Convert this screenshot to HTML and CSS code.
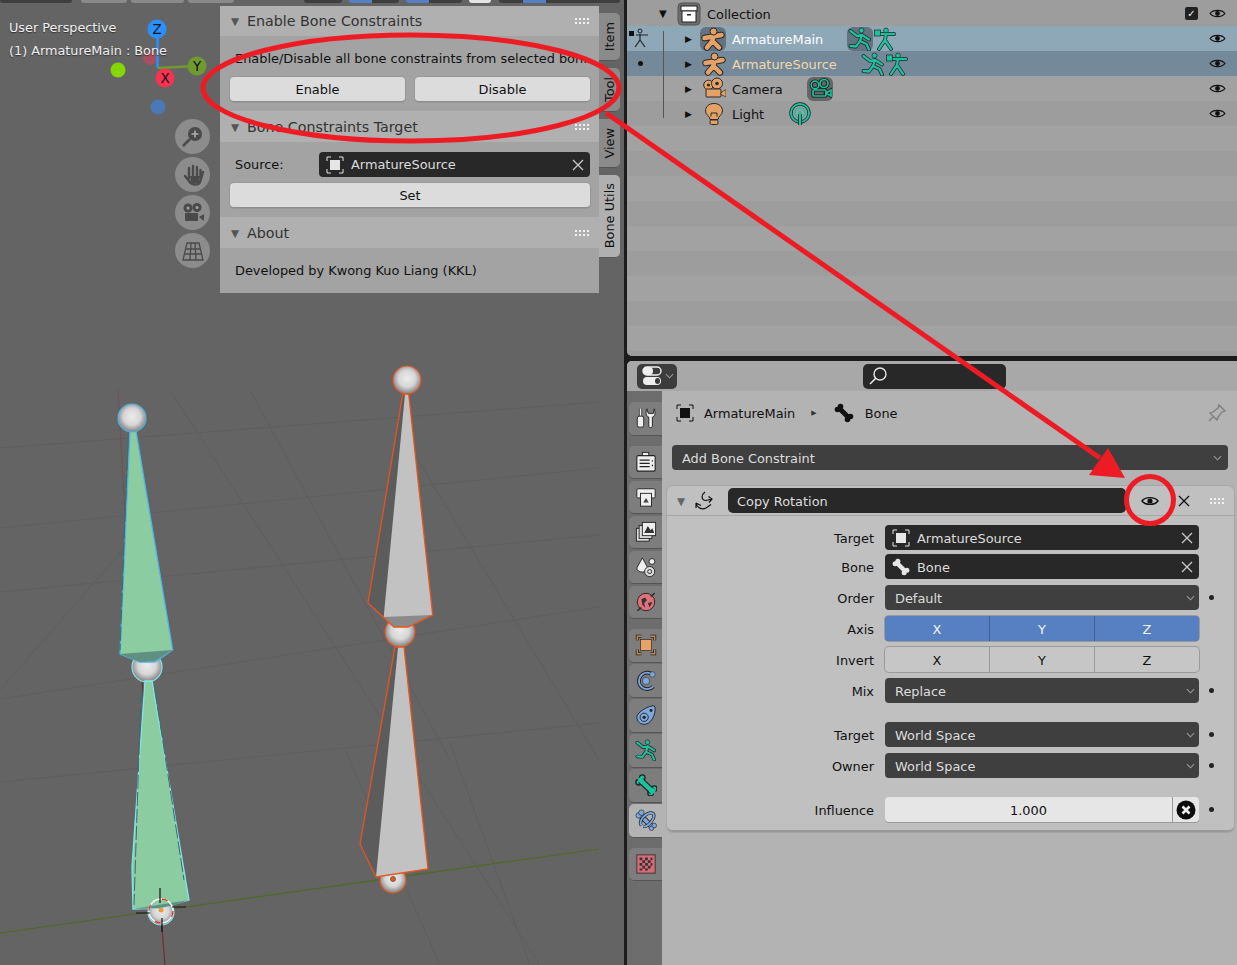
FILE: index.html
```html
<!DOCTYPE html>
<html lang="en">
<head>
<meta charset="utf-8">
<title>Bone Utils</title>
<link rel="stylesheet" href="styles.css">
</head>
<body>
<svg class="defs" width="0" height="0">
  <defs>
    <radialGradient id="ball" cx="50%" cy="45%" r="55%"><stop offset="0" stop-color="#ececec"/><stop offset=".55" stop-color="#d6d6d6"/><stop offset="1" stop-color="#7f7f7f"/></radialGradient>
    <symbol id="grip" viewBox="0 0 16 8"><path d="M1 1h2v2H1zM5 1h2v2H5zM9 1h2v2H9zM13 1h2v2h-2zM1 5h2v2H1zM5 5h2v2H5zM9 5h2v2H9zM13 5h2v2h-2z" fill="#f2f2f2"/></symbol>
    <symbol id="eye" viewBox="0 0 18 12"><path d="M1 6C4 1.500 14 1.500 17 6C14 10.500 4 10.500 1 6Z" fill="none" stroke="#111" stroke-width="1.400"/><circle cx="9" cy="6" r="2.600" fill="#111"/></symbol>
    <symbol id="x" viewBox="0 0 12 12"><path d="M1 1L11 11M11 1L1 11" fill="none" stroke="currentColor" stroke-width="1.300"/></symbol>
    <symbol id="chev" viewBox="0 0 10 6"><path d="M1 1L5 5L9 1" fill="none" stroke="#9a9a9a" stroke-width="1.200"/></symbol>
    <symbol id="objsel" viewBox="0 0 18 18"><path d="M1 5V1H5M13 1H17V5M17 13V17H13M5 17H1V13" fill="none" stroke="currentColor" stroke-width="1"/><rect x="4" y="4" width="10" height="10" fill="currentColor"/></symbol>
    <symbol id="armature" viewBox="0 0 24 24"><g fill="none" stroke-linecap="round" stroke-linejoin="round"><path d="M3.500 11L20.500 8M12 10L11.500 14L6 20.500M11.500 14L18 20.500" stroke="#2a2a2a" stroke-width="6.500"/><path d="M3.500 11L20.500 8M12 10L11.500 14L6 20.500M11.500 14L18 20.500" stroke="#e4a267" stroke-width="4.500"/></g><circle cx="12.500" cy="4.500" r="3.500" fill="#e4a267" stroke="#2a2a2a"/></symbol>
    <symbol id="pose" viewBox="0 0 24 24"><g fill="none" stroke-linecap="round" stroke-linejoin="round"><path d="M2.500 4L9 9L14 8L21 12.500M14 8L12 14L18.500 17L21 22.500M12 14L8 19.500L2.500 19" stroke="#222" stroke-width="3.800"/><path d="M2.500 4L9 9L14 8L21 12.500M14 8L12 14L18.500 17L21 22.500M12 14L8 19.500L2.500 19" stroke="#1cc29f" stroke-width="2.300"/></g><circle cx="13.500" cy="3.500" r="2.500" fill="#1cc29f" stroke="#222" stroke-width=".7"/></symbol>
    <symbol id="armdata" viewBox="0 0 24 24"><g fill="none" stroke-linecap="round" stroke-linejoin="round"><path d="M7 7L21 7M13 7L12 13L6 22M12 13L18 22" stroke="#222" stroke-width="3.800"/><path d="M7 7L21 7M13 7L12 13L6 22M12 13L18 22" stroke="#1cc29f" stroke-width="2.300"/></g><rect x="1.500" y="3" width="6" height="6" fill="#1cc29f" stroke="#222" stroke-width=".7"/><circle cx="13" cy="3.500" r="2.400" fill="#1cc29f" stroke="#222" stroke-width=".7"/></symbol>
    <symbol id="camera" viewBox="0 0 24 24"><circle cx="6.500" cy="8" r="4.800" fill="#e4a267" stroke="#2a2a2a"/><circle cx="15" cy="6.500" r="5.500" fill="#e4a267" stroke="#2a2a2a"/><circle cx="6.500" cy="8" r="1.600" fill="#2a2a2a"/><circle cx="15" cy="6.500" r="1.800" fill="#2a2a2a"/><rect x="4" y="12" width="15" height="8" rx="1" fill="#e4a267" stroke="#2a2a2a"/><path d="M19 15.500L24 12.500V20L19 17.500Z" fill="#e4a267" stroke="#2a2a2a" stroke-width=".7"/></symbol>
    <symbol id="camdata" viewBox="0 0 24 24"><g fill="none" stroke="#111" stroke-width="3.200"><circle cx="7" cy="8" r="3.800"/><circle cx="16" cy="6.500" r="4"/><rect x="5" y="13" width="13" height="6" rx="1"/><path d="M18 16L23 13V19Z"/></g><g fill="none" stroke="#1cc29f" stroke-width="1.700"><circle cx="7" cy="8" r="3.800"/><circle cx="16" cy="6.500" r="4"/><rect x="5" y="13" width="13" height="6" rx="1"/><path d="M18 16L23 13V19Z"/></g></symbol>
    <symbol id="light" viewBox="0 0 24 24"><path d="M12 1.500C6.500 1.500 3.500 5 3.500 9C3.500 13 8 14 8 17.500H16C16 14 20.500 13 20.500 9C20.500 5 17.500 1.500 12 1.500Z" fill="#e4a267" stroke="#2a2a2a"/><path d="M9 11V14.500M15 11V14.500M9 11H15" stroke="#2a2a2a" fill="none"/><rect x="8" y="18" width="8" height="4.500" rx="1.500" fill="#e4a267" stroke="#2a2a2a"/></symbol>
    <symbol id="lightdata" viewBox="0 0 24 24"><circle cx="12" cy="11" r="9" fill="none" stroke="#222" stroke-width="3.400"/><circle cx="12" cy="11" r="9" fill="none" stroke="#1cc29f" stroke-width="2"/><circle cx="12" cy="11" r="5" fill="none" stroke="#1cc29f" stroke-width="1.500"/><circle cx="12" cy="11" r="2" fill="#1cc29f"/><path d="M12 12V23" stroke="#222" stroke-width="3.500"/><path d="M12 12V23" stroke="#1cc29f" stroke-width="2"/></symbol>
    <symbol id="collection" viewBox="0 0 24 24"><rect x="1" y="1" width="22" height="22" rx="4" fill="#6e6e6e" stroke="#555"/><rect x="4" y="4" width="16" height="5" fill="#fff" stroke="#222"/><rect x="5" y="9" width="14" height="11" fill="#fff" stroke="#222"/><rect x="10" y="12" width="4" height="1.500" fill="#222"/></symbol>
    <symbol id="bone" viewBox="0 0 20 20"><path d="M5 5L15 15" stroke="currentColor" stroke-width="5"/><circle cx="3.500" cy="6.500" r="2.800" fill="currentColor"/><circle cx="6.500" cy="3.500" r="2.800" fill="currentColor"/><circle cx="13.500" cy="16.500" r="2.800" fill="currentColor"/><circle cx="16.500" cy="13.500" r="2.800" fill="currentColor"/></symbol>
    <symbol id="bonefat" viewBox="0 0 24 24"><g stroke="#222" stroke-width="1.400" fill="#1cc29f"><circle cx="4" cy="9" r="3"/><circle cx="8" cy="4" r="3"/><circle cx="17" cy="21" r="3"/><circle cx="21" cy="16" r="3"/></g><path d="M6 7L19 19" stroke="#222" stroke-width="7.500"/><path d="M4.500 8L8 4.500M17 21L21 16.500M6 7L19 19" stroke="#1cc29f" stroke-width="5"/></symbol>
  </defs>
</svg>

<div class="app">
  <section class="viewport">
    <svg class="scene" viewBox="0 0 624 965" width="624" height="965">
      <g class="grid">
        <path d="M0 448L599 402M0 528L599 468M0 592L599 535M0 699L599 607M0 782L599 723"/>
        <path d="M170 390L540 965M250 390L450 760M400 430L599 760M450 743L530 965M140 530L0 690M345 750L440 965"/>
      </g>
      <path d="M118 390L133 660" class="redaxis"/>
      <path d="M142 680L165 965" class="redaxis2"/>
      <path d="M0 933L599 849" class="greenaxis"/>

      <circle cx="147" cy="667" r="15" class="sphere s-blue"/>
      <polygon points="130,431 136,431 172.700,650 155,662 140,662 120,654" class="bone-blue"/>
      <polygon points="120,654 172.700,650 155,661 140,662" class="bone-green-dark"/>
      <circle cx="132" cy="418" r="14" class="sphere s-blue2"/>
      <path d="M128 440L120 650" class="bone-dash"/>

      <circle cx="161" cy="912" r="13" class="sphere s-cyan"/>
      <polygon points="145,681 152,681 189,900 160,908 133,909 132,867" class="bone-cyan"/>
      <polygon points="133,909 189,900 175,905 160,908" class="bone-green-dark"/>
      <path d="M141 690L134 905M155 690L184 880" class="bone-dash"/>
      <g class="cursor">
        <circle cx="161" cy="911" r="12" class="cur-w"/>
        <circle cx="161" cy="911" r="12" class="cur-r"/>
        <path d="M160 888V903M162 918V932M136 913H150M172 907H186"/>
      </g>
      <circle cx="161" cy="910" r="2.500" fill="#f29a2e"/>

      <circle cx="393" cy="880" r="13" class="sphere s-orange"/>
      <circle cx="400" cy="632" r="15" class="sphere s-orange"/>
      <polygon points="402.700,394 408.700,394 432.700,615 408,627 394,627 368,603" class="bone-dark"/>
      <polygon points="405,394 408.700,394 432.700,615 408,627 394,627 383.700,617" class="bone-grey"/>
      <polygon points="383.700,617 432.700,615 408,627 394,627" class="bone-mid"/>
      <polygon points="402.700,394 408.700,394 432.700,615 408,627 394,627 368,603" class="bone-line"/>
      <circle cx="407" cy="380" r="14" class="sphere s-orange"/>

      <polygon points="395,647 404,647 428,869 376,877 360,844" class="bone-dark"/>
      <polygon points="398,647 404,647 428,869 376,877" class="bone-grey"/>
      <polygon points="395,647 404,647 428,869 376,877 360,844" class="bone-line"/>
      <circle cx="393" cy="879" r="2.500" fill="#e85a20" stroke="#333" stroke-width=".6"/>
    </svg>

    <div class="topstrip">
      <span class="strip s1"></span><span class="strip s2"></span><span class="strip s3"></span><span class="strip s4"></span>
      <span class="strip s5"></span><span class="strip s6"></span><span class="strip s7"></span><span class="strip s8"></span><span class="strip s9"></span>
    </div>

    <svg class="gizmo" viewBox="0 0 220 120" width="220" height="120">
      <circle cx="150" cy="58" r="7" fill="#a8505f"/>
      <circle cx="118" cy="70" r="7.500" fill="#84d800"/>
      <circle cx="158" cy="107" r="7.500" fill="#4a79b5"/>
      <path d="M157.500 68V30" stroke="#2a8fff" stroke-width="2.500"/>
      <path d="M157.500 68L197 66" stroke="#6f9a2e" stroke-width="2.500"/>
      <circle cx="157" cy="29" r="9.500" fill="#2a8fff"/>
      <circle cx="197" cy="66" r="9.500" fill="#6f9a2e"/>
      <circle cx="165" cy="78" r="9.500" fill="#f53352"/>
      <text x="157" y="34" class="gz">Z</text>
      <text x="197" y="71" class="gz">Y</text>
      <text x="165" y="83" class="gz">X</text>
    </svg>

    <div class="viewinfo">
      <div>User Perspective</div>
      <div>(1) ArmatureMain : Bone</div>
    </div>

    <div class="navgizmo">
      <div class="navbtn"><svg viewBox="0 0 24 24" width="24" height="24"><circle cx="14" cy="9" r="7" fill="#4a4a4a"/><path d="M14 5.500V12.500M10.500 9H17.500" stroke="#b0b0b0" stroke-width="1.600"/><path d="M9 14L2 21" stroke="#4a4a4a" stroke-width="2.500"/></svg></div>
      <div class="navbtn"><svg viewBox="0 0 24 24" width="24" height="24"><path d="M4 13L8 18C10 22 17 23 19 19L22 9M8 15V5M12 14V3M16 14V4M19.500 14V7" fill="none" stroke="#4a4a4a" stroke-width="2.400" stroke-linecap="round"/><path d="M9 13H19L18 20H10Z" fill="#4a4a4a"/></svg></div>
      <div class="navbtn"><svg viewBox="0 0 24 24" width="24" height="24"><circle cx="7" cy="7" r="4.500" fill="#4a4a4a"/><circle cx="16" cy="6.500" r="4.500" fill="#4a4a4a"/><circle cx="7" cy="7" r="1.500" fill="#a0a0a0"/><circle cx="16" cy="6.500" r="1.500" fill="#a0a0a0"/><rect x="4" y="12" width="13" height="8" rx="1" fill="#4a4a4a"/><path d="M18 16L23 13V20Z" fill="#4a4a4a"/></svg></div>
      <div class="navbtn"><svg viewBox="0 0 24 24" width="24" height="24"><path d="M6 4H18L22 21H2ZM4.500 10H19.500M3.500 15H20.500M10 4L9 21M14 4L15 21" fill="none" stroke="#4a4a4a" stroke-width="1.300"/></svg></div>
    </div>

    <div class="sidebar">
      <div class="npanel">
        <div class="phead first"><span class="tri">▼</span><span class="ptitle">Enable Bone Constraints</span><svg class="grip"><use href="#grip"/></svg></div>
        <div class="pbody">
          <div class="ptext">Enable/Disable all bone constraints from selected bon...</div>
          <div class="btnrow"><button class="btn">Enable</button><button class="btn">Disable</button></div>
        </div>
        <div class="phead"><span class="tri">▼</span><span class="ptitle">Bone Constraints Target</span><svg class="grip"><use href="#grip"/></svg></div>
        <div class="pbody">
          <div class="srcrow"><span class="ptext srclabel">Source:</span>
            <div class="darkfield"><svg class="ficon"><use href="#objsel"/></svg><span>ArmatureSource</span><svg class="fx"><use href="#x"/></svg></div>
          </div>
          <button class="btn btnwide">Set</button>
        </div>
        <div class="phead"><span class="tri">▼</span><span class="ptitle">About</span><svg class="grip"><use href="#grip"/></svg></div>
        <div class="pbody pabout"><div class="ptext">Developed by Kwong Kuo Liang (KKL)</div></div>
      </div>
      <div class="vtabs">
        <div class="vtab t-item"><span>Item</span></div>
        <div class="vtab t-tool"><span>Tool</span></div>
        <div class="vtab t-view"><span>View</span></div>
        <div class="vtab t-utils"><span>Bone Utils</span></div>
      </div>
    </div>
  </section>

  <div class="right">
    <section class="outliner">
      <div class="treeline"></div>
      <div class="row r0">
        <span class="otri ind0">▼</span><svg class="oicon"><use href="#collection"/></svg><span class="oname">Collection</span>
        <span class="check">✓</span><svg class="oeye"><use href="#eye"/></svg>
      </div>
      <div class="row r-sel">
        <svg class="mode" viewBox="0 0 24 24"><rect x="1" y="5" width="5" height="5" fill="#111"/><circle cx="12" cy="5" r="2" fill="none" stroke="#222"/><path d="M8 9H20M12 8V14L7 21M12 14L17 21" fill="none" stroke="#222" stroke-width="1.200"/></svg>
        <span class="otri ind1">▶</span><span class="hl"><svg class="oicon"><use href="#armature"/></svg></span><span class="oname white">ArmatureMain</span>
        <span class="hl sub"><svg class="oicon"><use href="#pose"/></svg></span><svg class="oicon"><use href="#armdata"/></svg>
        <svg class="oeye"><use href="#eye"/></svg>
      </div>
      <div class="row r-act">
        <span class="mdot"></span>
        <span class="otri ind2">▶</span><svg class="oicon"><use href="#armature"/></svg><span class="oname peach">ArmatureSource</span>
        <svg class="oicon sub"><use href="#pose"/></svg><svg class="oicon"><use href="#armdata"/></svg>
        <svg class="oeye"><use href="#eye"/></svg>
      </div>
      <div class="row r1">
        <span class="otri ind2">▶</span><svg class="oicon"><use href="#camera"/></svg><span class="oname">Camera</span>
        <span class="hl sub"><svg class="oicon"><use href="#camdata"/></svg></span>
        <svg class="oeye"><use href="#eye"/></svg>
      </div>
      <div class="row r0">
        <span class="otri ind2">▶</span><svg class="oicon"><use href="#light"/></svg><span class="oname">Light</span>
        <svg class="oicon sub"><use href="#lightdata"/></svg>
        <svg class="oeye"><use href="#eye"/></svg>
      </div>
      <div class="row r1"></div><div class="row r0"></div><div class="row r1"></div><div class="row r0"></div><div class="row r1"></div><div class="row r0"></div><div class="row r1"></div><div class="row r0"></div><div class="row r1"></div><div class="row r0"></div>
    </section>

    <section class="props">
      <header class="prophead">
        <div class="editor"><svg viewBox="0 0 22 20" width="22" height="20"><rect x="1" y="1" width="18" height="8" rx="4" fill="none" stroke="#eee" stroke-width="1.500"/><rect x="1" y="1" width="10" height="8" rx="4" fill="#eee"/><rect x="1" y="11" width="18" height="8" rx="4" fill="#eee"/><rect x="13" y="12" width="5" height="6" rx="3" fill="#3c3c3c"/></svg><svg class="echev"><use href="#chev"/></svg></div>
        <div class="search"><svg viewBox="0 0 20 20" width="20" height="20"><circle cx="12" cy="8" r="6" fill="none" stroke="#e6e6e6" stroke-width="1.400"/><path d="M8 12L2 18" stroke="#e6e6e6" stroke-width="1.600"/></svg></div>
      </header>
      <div class="propmain">
        <nav class="tabs">
          <div class="tab"><svg viewBox="0 0 24 24"><path d="M6 1.500V10" stroke="#222" stroke-width="3.400"/><path d="M6 1.500V10" stroke="#eee" stroke-width="1.800"/><rect x="2.500" y="10" width="7" height="12" rx="2" fill="#eee" stroke="#222"/><path d="M13 2C11 8 13 10.500 15 11V21C15 23 19 23 19 21V11C21 10.500 23 8 21 2L20 7H14.500Z" fill="#eee" stroke="#222"/></svg></div>
          <div class="tab gap"><svg viewBox="0 0 24 24"><rect x="2" y="5" width="20" height="17" rx="1.500" fill="#eee" stroke="#222" stroke-width="1.200"/><rect x="8" y="1.500" width="7" height="3.500" fill="#eee" stroke="#222"/><path d="M5 10H16M5 13.500H16M5 17H16M19 10V11.500M19 15V16.500" stroke="#222" stroke-width="1.400"/></svg></div>
          <div class="tab"><svg viewBox="0 0 24 24"><rect x="2" y="3" width="20" height="10" rx="1.500" fill="#eee" stroke="#222"/><rect x="6" y="8" width="12" height="14" fill="#eee" stroke="#222"/><path d="M9 18L12 13L15 18Z" fill="#444"/></svg></div>
          <div class="tab"><svg viewBox="0 0 24 24"><rect x="1.500" y="8" width="14" height="14" fill="#ddd" stroke="#222"/><rect x="4.500" y="5" width="14" height="14" fill="#ddd" stroke="#222"/><rect x="8" y="1.500" width="14.500" height="14.500" fill="#eee" stroke="#222"/><path d="M10 13L14 5.500L17 10L19 8L21 13Z" fill="#333"/></svg></div>
          <div class="tab"><svg viewBox="0 0 24 24"><path d="M8 2L14 13C14 19 2 19 2 13Z" fill="#eee" stroke="#222"/><circle cx="18.500" cy="6" r="3.200" fill="#eee" stroke="#222"/><circle cx="16" cy="17" r="5.500" fill="#ddd" stroke="#222"/><circle cx="16" cy="17" r="2.200" fill="none" stroke="#222"/></svg></div>
          <div class="tab"><svg viewBox="0 0 24 24"><circle cx="12" cy="12" r="9.500" fill="#e0707a" stroke="#222"/><path d="M7 9L11 7L13 10L10 13L11 18L8 15ZM14 13L19 12L16 18Z" fill="#333"/><path d="M2.500 21.500L7 18M21.500 2.500L17 6" stroke="#222" stroke-width="1.500"/></svg></div>
          <div class="tab gap"><svg viewBox="0 0 24 24"><path d="M2.500 7V2.500H7M17 2.500H21.500V7M21.500 17V21.500H17M7 21.500H2.500V17" fill="none" stroke="#222" stroke-width="3.200"/><path d="M2.500 7V2.500H7M17 2.500H21.500V7M21.500 17V21.500H17M7 21.500H2.500V17" fill="none" stroke="#c98a52" stroke-width="1.500"/><rect x="6" y="6" width="12" height="12" fill="#e8a468" stroke="#222" stroke-width=".7"/></svg></div>
          <div class="tab"><svg viewBox="0 0 24 24"><path d="M20 7A9 9 0 1 0 20 19" fill="none" stroke="#222" stroke-width="4"/><path d="M20 7A9 9 0 1 0 20 19" fill="none" stroke="#7ea7de" stroke-width="2"/><circle cx="12" cy="13" r="4" fill="#7ea7de" stroke="#222" stroke-width=".6"/><circle cx="19" cy="6" r="3" fill="#7ea7de" stroke="#222" stroke-width=".6"/></svg></div>
          <div class="tab"><svg viewBox="0 0 24 24"><path d="M2 14C2 9 16 1 21 2C24 6 20 20 12 22C6 23 2 19 2 14Z" fill="#7ea7de" stroke="#222"/><circle cx="10" cy="14.500" r="4.500" fill="none" stroke="#222"/><circle cx="10" cy="14.500" r="1.800" fill="#222"/><circle cx="17.500" cy="7" r="1.600" fill="#222"/></svg></div>
          <div class="tab"><svg><use href="#pose"/></svg></div>
          <div class="tab"><svg><use href="#bonefat"/></svg></div>
          <div class="tab active"><svg viewBox="0 0 24 24"><path d="M5 6L18 19" stroke="#222" stroke-width="6"/><path d="M5 6L18 19" stroke="#7ea7de" stroke-width="4"/><circle cx="4" cy="7" r="3" fill="#7ea7de" stroke="#222" stroke-width=".7"/><circle cx="7" cy="4" r="3" fill="#7ea7de" stroke="#222" stroke-width=".7"/><circle cx="18" cy="21" r="2.500" fill="#7ea7de" stroke="#222" stroke-width=".7"/><circle cx="21" cy="18" r="2.500" fill="#7ea7de" stroke="#222" stroke-width=".7"/><path d="M7 18C3 12 14 2 20 5C23 10 14 20 9 19" fill="none" stroke="#222" stroke-width="3.500"/><path d="M7 18C3 12 14 2 20 5C23 10 14 20 9 19" fill="none" stroke="#7ea7de" stroke-width="2"/></svg></div>
          <div class="tab gap"><svg viewBox="0 0 24 24"><rect x="2" y="2" width="20" height="20" fill="#d96b78" stroke="#333"/><path d="M5 5h3v3H5zM11 5h3v3h-3zM17 5h2v3h-2zM8 8h3v3H8zM14 8h3v3h-3zM5 11h3v3H5zM11 11h3v3h-3zM17 11h2v3h-2zM8 14h3v3H8zM14 14h3v3h-3zM5 17h3v2H5zM11 17h3v2h-3z" fill="#333"/></svg></div>
        </nav>
        <main class="context">
          <div class="crumbs">
            <svg class="crumbicon"><use href="#objsel"/></svg><span class="cname">ArmatureMain</span><span class="csep">▶</span>
            <svg class="cbone"><use href="#bone"/></svg><span class="cleaf">Bone</span>
            <svg class="pin" viewBox="0 0 20 20"><path d="M12 2L18 8L15 9L11 14L10 17L3 10L6 9L11 5ZM6 14L2 18" fill="none" stroke="#7d7d7d" stroke-width="1.300"/></svg>
          </div>
          <div class="addbtn"><span>Add Bone Constraint</span><svg class="chev"><use href="#chev"/></svg></div>
          <div class="cpanel">
            <div class="chead">
              <span class="ctri">▼</span>
              <svg class="crot" viewBox="0 0 20 20"><path d="M11 1C7 4 7 9 12 9.500L18 8M14.500 5.500L18 8L15 11.500M2 12C3 17 8 19 12 17L17 13.500M7 14.500L2 12M2 12L2 17" fill="none" stroke="#111" stroke-width="1.200"/></svg>
              <div class="cname-field">Copy Rotation</div>
              <svg class="ceye"><use href="#eye"/></svg>
              <svg class="cx"><use href="#x"/></svg>
              <svg class="grip"><use href="#grip"/></svg>
            </div>
            <div class="cbody">
              <div class="frow tight"><label>Target</label><div class="darkfield wide"><svg class="ficon"><use href="#objsel"/></svg><span>ArmatureSource</span><svg class="fx"><use href="#x"/></svg></div><i class="nodot"></i></div>
              <div class="frow"><label>Bone</label><div class="darkfield wide"><svg class="ficon whitebone"><use href="#bone"/></svg><span>Bone</span><svg class="fx"><use href="#x"/></svg></div><i class="nodot"></i></div>
              <div class="frow"><label>Order</label><div class="select"><span>Default</span><svg class="chev"><use href="#chev"/></svg></div><i class="dot"></i></div>
              <div class="frow"><label>Axis</label><div class="tri-btn blue"><b>X</b><b>Y</b><b>Z</b></div><i class="nodot"></i></div>
              <div class="frow"><label>Invert</label><div class="tri-btn"><b>X</b><b>Y</b><b>Z</b></div><i class="nodot"></i></div>
              <div class="frow spaced"><label>Mix</label><div class="select"><span>Replace</span><svg class="chev"><use href="#chev"/></svg></div><i class="dot"></i></div>
              <div class="frow"><label>Target</label><div class="select"><span>World Space</span><svg class="chev"><use href="#chev"/></svg></div><i class="dot"></i></div>
              <div class="frow spaced"><label>Owner</label><div class="select"><span>World Space</span><svg class="chev"><use href="#chev"/></svg></div><i class="dot"></i></div>
              <div class="frow"><label>Influence</label><div class="slider"><span>1.000</span><div class="slidex"><svg viewBox="0 0 20 20"><circle cx="10" cy="10" r="9.500" fill="#0c0c0c"/><path d="M6.500 6.500L13.500 13.500M13.500 6.500L6.500 13.500" stroke="#eee" stroke-width="2.600"/></svg></div></div><i class="dot"></i></div>
            </div>
          </div>
        </main>
      </div>
    </section>
  </div>
</div>

<svg class="annot" viewBox="0 0 1237 965" width="1237" height="965">
  <ellipse cx="411" cy="88" rx="208" ry="53" class="red"/>
  <path d="M606 113L1100 458" class="red"/>
  <polygon points="1108,448 1089,475 1125,478" fill="#ed1c24"/>
  <circle cx="1150" cy="500" r="23.500" class="red"/>
</svg>
</body>
</html>
```

FILE: styles.css
```css
* { box-sizing: border-box; }
html, body { margin: 0; padding: 0; }
body { width: 1237px; height: 965px; overflow: hidden; position: relative; font-family: "DejaVu Sans", sans-serif; font-size: 12.9px; color: #111; background: #1c1c1c; }
.defs { position: absolute; }
.app { display: flex; width: 1237px; height: 965px; }

.viewport { position: relative; width: 624px; height: 965px; background: #646464; overflow: hidden; flex: none; }
.scene { position: absolute; left: 0; top: 0; }
.grid path { fill: none; stroke: #5e5e5e; stroke-width: 1; }
.redaxis { fill: none; stroke: #6e5252; stroke-width: 1; }
.redaxis2 { fill: none; stroke: #6b2f35; stroke-width: 1.200; }
.greenaxis { fill: none; stroke: #4f6b22; stroke-width: 1.200; }
.sphere { fill: url(#ball); }
.s-blue { stroke: #8be4ea; stroke-width: 1.200; }
.s-blue2 { stroke: #4ab5ea; stroke-width: 1.200; }
.s-cyan { stroke: #8be4ea; stroke-width: 1.200; }
.s-orange { stroke: #e8531f; stroke-width: 1.200; }
.bone-blue { fill: #8bcca0; stroke: #4ab5ea; stroke-width: 1.300; }
.bone-cyan { fill: #8bcca0; stroke: #7fe6ef; stroke-width: 1.300; }
.bone-green-dark { fill: #5f9082; }
.bone-dash { fill: none; stroke: #3d6a70; stroke-width: 1; stroke-dasharray: 14 3; }
.bone-dark { fill: #5c5c5c; }
.bone-grey { fill: #c2c2c2; }
.bone-mid { fill: #8a8a8a; }
.bone-line { fill: none; stroke: #e8531f; stroke-width: 1.300; }
.cursor path { stroke: #111; stroke-width: 1.200; fill: none; }
.cur-w { fill: none; stroke: #fff; stroke-width: 1.300; }
.cur-r { fill: none; stroke: #e8282c; stroke-width: 1.300; stroke-dasharray: 6 13; }

.topstrip { position: absolute; inset: 0 0 auto 0; height: 3px; display: flex; }
.strip { display: block; height: 3px; border-radius: 0 0 4px 4px; background: #8a8a8a; margin-right: 4px; }
.s1 { width: 72px; background: #3e3e3e; margin-right: 9px; }
.s2 { width: 46px; }
.s3 { width: 54px; }
.s4 { width: 46px; margin-right: 70px; }
.s5 { width: 38px; background: #3e3e3e; margin-right: 7px; }
.s6 { width: 50px; background: linear-gradient(90deg, #5680c2 46%, #3e3e3e 46%); margin-right: 7px; }
.s7 { width: 56px; background: linear-gradient(90deg, #5680c2 41%, #3e3e3e 41%); margin-right: 7px; }
.s8 { width: 23px; background: #e6e6e6; margin-right: 8px; }
.s9 { width: 121px; background: linear-gradient(90deg, #3e3e3e 20%, #5680c2 20%, #5680c2 39%, #3e3e3e 39%); }

.gizmo { position: absolute; left: 0; top: 0; }
.gz { font-size: 13.5px; fill: #111; text-anchor: middle; font-family: "DejaVu Sans", sans-serif; }
.viewinfo { position: absolute; left: 9px; top: 16px; color: #f0f0f0; font-size: 12.8px; line-height: 23px; text-shadow: 0 1px 1px #333; }
.navgizmo { position: absolute; left: 175px; top: 119px; display: flex; flex-direction: column; gap: 3px; }
.navbtn { width: 35px; height: 35px; border-radius: 50%; background: #8c8c8c; display: flex; align-items: center; justify-content: center; }

.sidebar { position: absolute; left: 220px; top: 6px; display: flex; align-items: flex-start; }
.npanel { width: 379px; color: #111; }
.phead { height: 31px; background: #b0b0b0; display: flex; align-items: center; padding: 0 9px 0 11px; color: #333; }
.phead.first { height: 30px; }
.tri { font-size: 10.500px; color: #555; width: 16px; }
.ptitle { flex: 1; font-size: 14.250px; }
.grip { width: 16px; height: 8px; flex: none; }
.pbody { background: #a3a3a3; padding: 10px 9px 9px 10px; height: 75px; }
.pabout { height: 45px; }
.ptext { padding-left: 5px; line-height: 25px; white-space: nowrap; height: 23px; }
.btnrow { display: flex; gap: 10px; margin-top: 8px; }
.btn { flex: 1; height: 25px; border: 0; border-bottom: 1px solid #8c8c8c; border-radius: 4px; background: #dcdcdc; font: inherit; color: #111; padding: 0; box-shadow: 0 0 0 1px #989898; }
.btnwide { width: 100%; margin-top: 6px; display: block; }
.srcrow { display: flex; align-items: center; }
.srclabel { width: 89px; flex: none; line-height: 23px; }
.darkfield { flex: 1; height: 25px; border-radius: 4px; background: #282828; color: #dcdcdc; display: flex; align-items: center; padding: 0 6px 0 7px; }
.darkfield span { flex: 1; }
.ficon { width: 18px; height: 18px; color: #e6e6e6; margin-right: 7px; flex: none; }
.fx { width: 12px; height: 12px; color: #c9c9c9; flex: none; }
.whitebone { color: #e6e6e6; }
.vtabs { display: flex; flex-direction: column; gap: 7px; padding-top: 7px; width: 21px; }
.vtab { background: #8b8b8b; border-radius: 0 5px 5px 0; border-bottom: 1px solid #555; display: flex; align-items: center; justify-content: center; color: #111; }
.vtab span { writing-mode: vertical-rl; transform: rotate(180deg); white-space: nowrap; }
.t-item { height: 48px; }
.t-tool { height: 44px; }
.t-view { height: 49px; }
.t-utils { height: 83px; background: #b0b0b0; }

.right { width: 610px; margin-left: 3px; display: flex; flex-direction: column; flex: none; }
.outliner { position: relative; height: 356px; background: #9e9e9e; overflow: hidden; padding-top: 1px; border-bottom-left-radius: 5px; }
.treeline { position: absolute; left: 36px; top: 31px; width: 1px; height: 87px; background: #555; z-index: 1; }
.row { height: 25px; display: flex; align-items: center; padding-right: 11px; position: relative; }
.r0 { background: #9d9d9d; }
.r1 { background: #a2a2a2; }
.r-sel { background: #8fa8b8; }
.r-act { background: #74899a; }
.mode { position: absolute; left: 1px; top: 0; width: 24px; height: 24px; }
.mdot { position: absolute; left: 11px; top: 10px; width: 5px; height: 5px; border-radius: 50%; background: #111; }
.otri { font-size: 9px; color: #111; width: 12px; flex: none; }
.ind0 { margin-left: 32px; width: 18px; font-size: 10px; }
.ind1 { margin-left: 58px; width: 15px; }
.ind2 { margin-left: 58px; width: 17px; }
.oicon { width: 24px; height: 24px; flex: none; }
.hl { display: flex; width: 26px; height: 24px; align-items: center; justify-content: center; background: #63737f; border-radius: 6px; flex: none; }
.r1 .hl { background: #666; }
.oname { margin-left: 6px; padding-top: 1px; }
.white { color: #fff; }
.peach { color: #f5d7a8; }
.sub { margin-left: 24px; }
.check { position: absolute; left: 558px; top: 6px; width: 13px; height: 13px; border-radius: 2px; background: #222; color: #eee; font-size: 10px; line-height: 13px; text-align: center; }
.oeye { width: 17px; height: 11px; margin-left: auto; flex: none; }

.props { flex: 1; margin-top: 5px; background: #b3b3b3; border-radius: 5px 0 0 0; overflow: hidden; display: flex; flex-direction: column; }
.prophead { height: 30px; flex: none; background: #a8a8a8; position: relative; display: flex; align-items: center; padding-left: 10px; }
.editor { width: 40px; height: 25px; background: #3c3c3c; border-radius: 5px; display: flex; align-items: center; padding-left: 5px; }
.echev { width: 9px; height: 6px; margin-left: 1px; }
.search { margin-left: 186px; width: 143px; height: 25px; background: #282828; border-radius: 5px; padding: 2px 0 0 5px; }
.propmain { flex: 1; display: flex; min-height: 0; }
.tabs { width: 35px; flex: none; background: #6d6d6d; padding: 11px 0 0 2px; display: flex; flex-direction: column; gap: 1.500px; }
.tab { height: 33.500px; background: #7d7d7d; border-bottom: 1px solid #555; border-radius: 5px 0 0 5px; display: flex; align-items: center; justify-content: center; }
.tab svg { width: 22px; height: 22px; }
.tab.gap { margin-top: 8.500px; }
.tab.active { background: #b3b3b3; }
.context { flex: 1; padding: 9px 0 0 5px; min-width: 0; }
.crumbs { height: 25px; display: flex; align-items: center; padding: 0 10px 0 9px; }
.crumbicon { width: 18px; height: 18px; color: #111; flex: none; }
.cname { margin-left: 10px; padding-top: 1px; }
.cleaf { padding-top: 1px; }
.csep { font-size: 7px; margin: 0 16px; color: #333; }
.cbone { width: 20px; height: 20px; color: #111; margin: 0 11px 0 1px; flex: none; }
.pin { width: 20px; height: 20px; margin-left: auto; }
.addbtn { margin: 20px 9px 0 5px; height: 25px; background: #3f3f3f; border-radius: 4px; color: #ddd; display: flex; align-items: center; padding: 0 6px 0 10px; }
.addbtn span, .select span { flex: 1; padding-top: 1px; }
.chev { width: 9px; height: 6px; flex: none; }
.cpanel { margin: 16px 3px 0 0; height: 346px; background: #c0c0c0; border-radius: 6px; border-bottom: 2px solid #9a9a9a; box-shadow: 0 0 0 1px #a6a6a6; }
.chead { height: 30px; display: flex; align-items: center; border-bottom: 1px solid #a6a6a6; padding: 0 9px 0 10px; }
.ctri { font-size: 10.500px; color: #666; width: 17px; }
.crot { width: 20px; height: 20px; flex: none; }
.cname-field { width: 398px; height: 25px; margin-left: 14px; border-radius: 5px; background: #282828; color: #ddd; line-height: 27px; padding-left: 9px; }
.ceye { width: 18px; height: 12px; margin-left: 15px; flex: none; }
.cx { width: 12px; height: 12px; margin: 0 19px 0 19px; color: #111; flex: none; }
.cbody { padding: 9px 15px 0 0; display: flex; flex-direction: column; gap: 6px; }
.frow { display: flex; align-items: center; height: 25px; }
.frow.tight { margin-bottom: -2px; }
.frow.spaced { margin-bottom: 13px; }
.frow label { width: 207px; margin-right: 11px; text-align: right; flex: none; padding-top: 1px; }
.frow .wide, .select, .tri-btn, .slider { width: 314px; flex: none; }
.frow .wide span { padding-top: 1px; }
.select { height: 25px; background: #3f3f3f; color: #ddd; border-radius: 4px; display: flex; align-items: center; padding: 0 4px 0 10px; }
.tri-btn { height: 25px; display: flex; border-radius: 4px; overflow: hidden; box-shadow: 0 0 0 1px #9a9a9a; background: #9a9a9a; gap: 1px; }
.tri-btn b { flex: 1; font-weight: 400; text-align: center; line-height: 27px; background: #c6c6c6; }
.tri-btn.blue { background: #3f6299; }
.tri-btn.blue b { background: #5680c2; color: #f4f4f4; }
.slider { height: 25px; display: flex; background: #e6e6e6; border-radius: 4px; box-shadow: 0 1px 0 #9a9a9a; }
.slider span { flex: 1; text-align: center; line-height: 27px; border-right: 1px solid #9a9a9a; }
.slidex { width: 26px; display: flex; align-items: center; justify-content: center; }
.slidex svg { width: 20px; height: 20px; }
.dot, .nodot { display: block; width: 5px; height: 5px; margin-left: 10px; border-radius: 50%; flex: none; }
.dot { background: #222; }

.annot { position: absolute; left: 0; top: 0; pointer-events: none; }
.red { fill: none; stroke: #ed1c24; stroke-width: 5; }
```
